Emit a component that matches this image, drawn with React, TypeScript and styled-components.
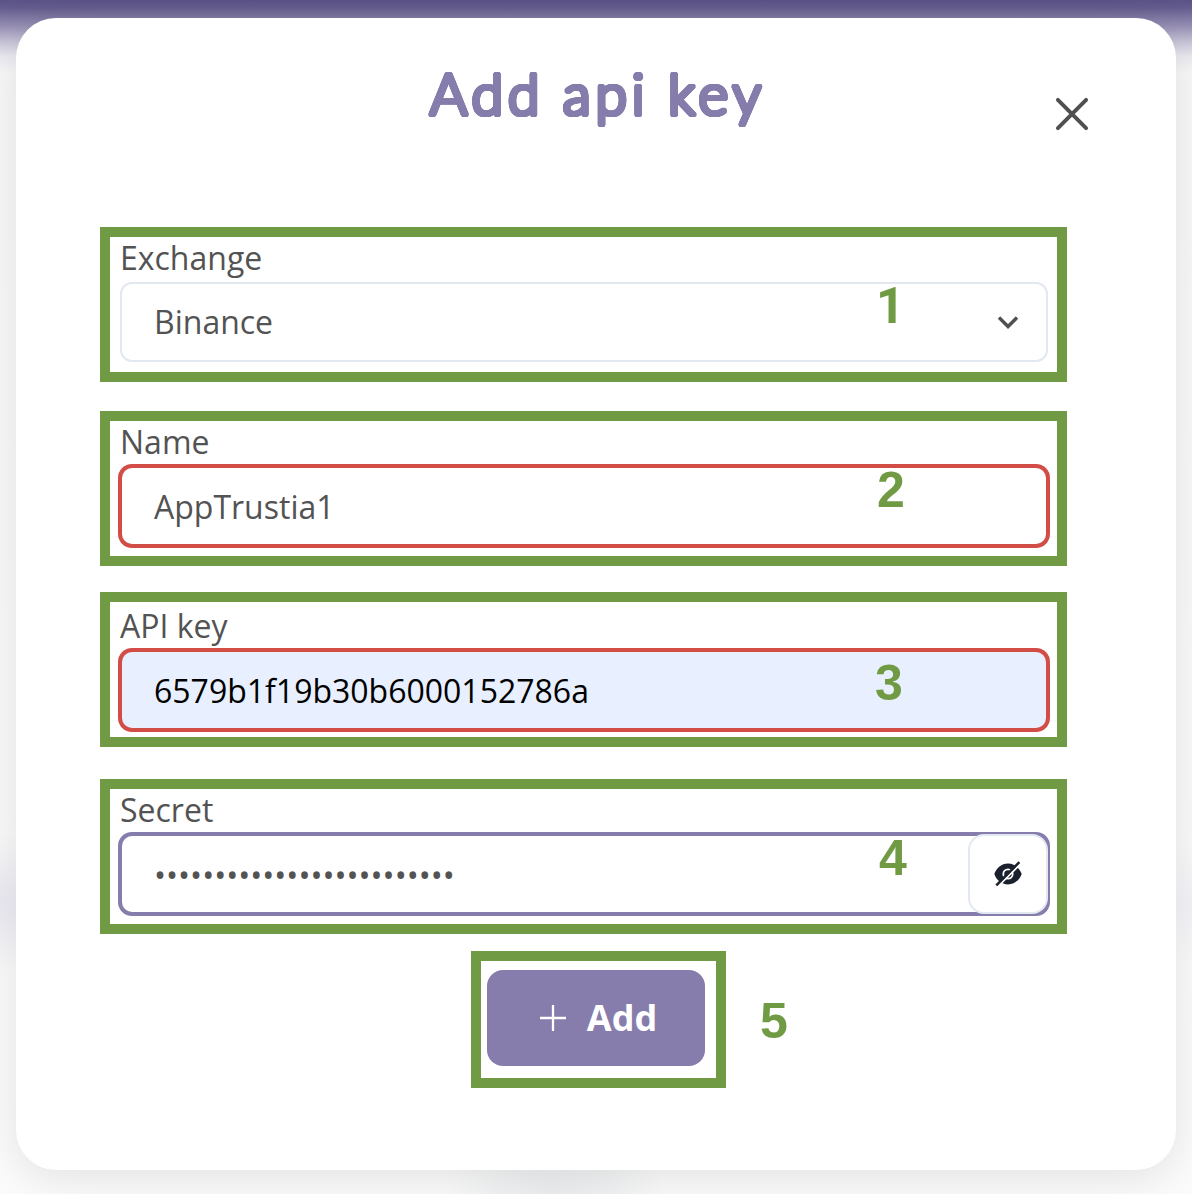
import React from "react";
import styled, { createGlobalStyle } from "styled-components";

const GlobalStyle = createGlobalStyle`
  * { box-sizing: border-box; }
  body { margin: 0; background: #fafafa; }
`;

const green = "#719a44";
const violet = "#867dac";
const red = "#d34d47";

// A disc of hard shadows thickens the light strokes and rounds their ends.
const roundedStroke = (radius: number) =>
  Array.from({ length: 24 }, (_, i) => {
    const angle = (i / 24) * Math.PI * 2;
    return `${(Math.cos(angle) * radius).toFixed(2)}px ${(Math.sin(angle) * radius).toFixed(2)}px 0 ${violet}`;
  }).join(", ");

const Backdrop = styled.div`
  display: flex;
  width: 1192px;
  height: 1194px;
  padding: 18px 16px 24px;
  overflow: hidden;
  background:
    radial-gradient(ellipse 110px 90px at 555px 1194px, #eceeef 0%, #edeff099 55%, #fafafa00 100%),
    radial-gradient(ellipse 60px 70px at 0px 903px, #ebe9f2 0%, #fafafa00 100%),
    radial-gradient(ellipse 50px 60px at 1192px 903px, #f3f2f7 0%, #fafafa00 100%),
    linear-gradient(#5b5287 0, #655d8e 8px, #8079a3 18px, #9992b6 27px, #c5c1d5 41px, #eae9f0 56px, #f8f8f8 72px, #fbfbfb 100%);
`;

const Dialog = styled.main`
  position: relative;
  display: flex;
  flex-direction: column;
  width: 1160px;
  height: 1152px;
  border-radius: 40px;
  background: #fff;
  box-shadow: 0 8px 44px rgba(0, 0, 0, 0.1);
  font-family: "Open Sans", sans-serif;
  color: #535353;
`;

const Header = styled.header`
  display: grid;
  grid-template-columns: 1fr 380px 1fr;
  height: 209px;
`;

const Title = styled.h1`
  grid-column: 2;
  margin: 0;
  padding: 37px 0 0 4px;
  color: ${violet};
  font: 300 57px/76px Lato, sans-serif;
  letter-spacing: 5px;
  word-spacing: -2px;
  text-align: center;
  text-shadow: ${roundedStroke(2.4)};
  white-space: nowrap;
`;

const CloseButton = styled.button`
  justify-self: end;
  width: 40px;
  height: 40px;
  margin: 76px 84px 0 0;
  padding: 0;
  border: 0;
  background: none;
`;

const Form = styled.form`
  display: flex;
  flex-direction: column;
  align-items: flex-start;
  padding-left: 84px;
`;

const Highlight = styled.section<{ $before?: number; $lead?: number }>`
  position: relative;
  width: 967px;
  height: 155px;
  margin-top: ${(p) => p.$before ?? 0}px;
  padding: ${(p) => p.$lead ?? 0}px 9px 0 10px;
  border: 10px solid ${green};
`;

const Label = styled.label`
  display: block;
  height: 45px;
  font-size: 32px;
  line-height: 42px;
`;

const Field = styled.div<{ $ring?: string; $filled?: boolean }>`
  display: flex;
  align-items: center;
  justify-content: space-between;
  width: 928px;
  height: 80px;
  padding-left: 32px;
  border: 2px solid ${(p) => p.$ring ?? "#e2e8f0"};
  border-radius: 12px;
  box-shadow: ${(p) => (p.$ring ? `0 0 0 2px ${p.$ring}` : "none")};
  background: ${(p) => (p.$filled ? "#e8effe" : "#fff")};
  color: ${(p) => (p.$filled ? "#000" : "#535353")};
  font-size: 32px;
  line-height: 44px;
`;

const Value = styled.span`
  padding-top: 2px;
`;

const Chevron = styled.svg`
  width: 40px;
  height: 40px;
  margin-right: 18px;
`;

const RevealButton = styled.button`
  display: grid;
  place-items: center;
  width: 80px;
  height: 80px;
  margin-right: -2px;
  padding: 0;
  border: 2px solid #e2e8f0;
  border-radius: 16px;
  background: #fff;
`;

const Step = styled.span<{ $x: number; $y: number; $face?: string }>`
  position: absolute;
  left: ${(p) => p.$x}px;
  top: ${(p) => p.$y}px;
  color: ${green};
  font: 700 50px/50px ${(p) => p.$face ?? '"Liberation Sans"'}, Arial, sans-serif;
`;

const SubmitHighlight = styled.div`
  position: relative;
  width: 255px;
  height: 137px;
  margin: 17px 0 0 371px;
  padding: 9px 11px 12px 6px;
  border: 10px solid ${green};
`;

const Submit = styled.button`
  display: flex;
  align-items: center;
  justify-content: center;
  gap: 21px;
  width: 218px;
  height: 96px;
  padding: 0 0 0 5px;
  border: 0;
  border-radius: 16px;
  background: ${violet};
  color: #fff;
  font: 700 36px/48px "Open Sans", sans-serif;
`;

const EyeOff = () => (
  <svg width="32" height="32" viewBox="0 0 32 32" fill="none">
    <path d="M2.3 16C4.5 10 9.5 5.6 16 5.6S27.5 10 29.7 16C27.5 22 22.5 26.4 16 26.4S4.5 22 2.3 16Z" fill="#1a202c" />
    <circle cx="16" cy="16" r="4.7" stroke="#fff" strokeWidth="1.8" />
    <path d="m5.5 28.9 22.7-22.7" stroke="#fff" strokeWidth="2" />
    <path d="m4.3 27.3 23-23.1" stroke="#1a202c" strokeWidth="2.6" />
  </svg>
);

export default function App() {
  return (
    <Backdrop>
      <GlobalStyle />
      <Dialog>
        <Header>
          <Title>Add api key</Title>
          <CloseButton type="button" aria-label="Close">
            <svg width="40" height="40" viewBox="0 0 40 40" stroke="#505050" strokeWidth="3.9" strokeLinecap="round">
              <path d="m5.9 5.9 28.2 28.2M34.1 5.9 5.9 34.1" />
            </svg>
          </CloseButton>
        </Header>
        <Form>
          <Highlight>
            <Label>Exchange</Label>
            <Field>
              <span>Binance</span>
              <Chevron viewBox="0 0 40 40" fill="none" stroke="#505050" strokeWidth="3.4">
                <path d="m11 15.5 9 9 9-9" />
              </Chevron>
            </Field>
            <Step $x={766} $y={44} $face="Roboto">1</Step>
          </Highlight>
          <Highlight $before={29}>
            <Label>Name</Label>
            <Field $ring={red}><Value>AppTrustia1</Value></Field>
            <Step $x={767} $y={44}>2</Step>
          </Highlight>
          <Highlight $before={26} $lead={3}>
            <Label>API key</Label>
            <Field $ring={red} $filled><Value>6579b1f19b30b6000152786a</Value></Field>
            <Step $x={765} $y={56}>3</Step>
          </Highlight>
          <Highlight $before={32}>
            <Label>Secret</Label>
            <Field $ring={violet}>
              <Value>{"•".repeat(25)}</Value>
              <RevealButton type="button" aria-label="Show secret"><EyeOff /></RevealButton>
            </Field>
            <Step $x={769} $y={44}>4</Step>
          </Highlight>
          <SubmitHighlight>
            <Submit type="button">
              <svg width="26" height="26" viewBox="0 0 26 26" stroke="#fff" strokeWidth="2.3">
                <path d="M13 0v26M0 13h26" />
              </svg>
              Add
            </Submit>
            <Step $x={279} $y={35}>5</Step>
          </SubmitHighlight>
        </Form>
      </Dialog>
    </Backdrop>
  );
}
